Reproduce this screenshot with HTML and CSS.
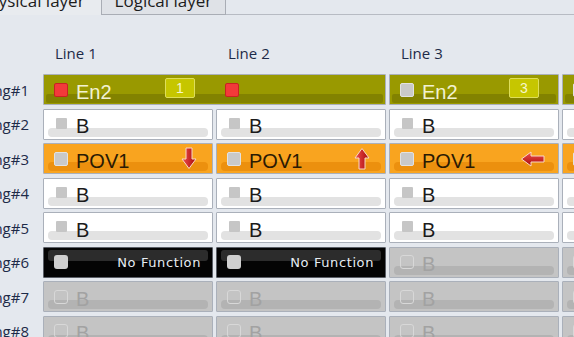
FILE: index.html
```html
<!DOCTYPE html>
<html lang="en">

<head>
    <meta charset="UTF-8">
    <meta name="viewport" content="width=device-width, initial-scale=1.0">
    <title>Physical layer</title>
    <link rel="stylesheet" href="styles.css">
</head>

<body>
    <div class="tabs">
        <div class="tab current">Physical layer</div>
        <div class="tab">Logical layer</div>
        <div class="tab-rest"></div>
    </div>
    <div class="panel">
        <div class="grid">
            <div class="head"></div>
            <div class="head">Line 1</div>
            <div class="head">Line 2</div>
            <div class="head">Line 3</div>
            <div class="head">Line 4</div>

            <!-- row 1 -->
            <div class="label"><span>Setting#1</span></div>
            <div class="cell olive group">
                <div class="slot">
                    <i class="sq red"></i><span class="txt">En2</span><span class="badge">1</span>
                </div>
                <div class="slot">
                    <i class="sq red"></i>
                </div>
            </div>
            <div class="cell olive"><i class="sq"></i><span class="txt">En2</span><span class="badge">3</span></div>
            <div class="cell olive"><i class="sq"></i><span class="txt">En2</span></div>

            <!-- row 2 -->
            <div class="label"><span>Setting#2</span></div>
            <div class="cell white"><i class="sq small"></i><span class="txt">B</span></div>
            <div class="cell white"><i class="sq small"></i><span class="txt">B</span></div>
            <div class="cell white"><i class="sq small"></i><span class="txt">B</span></div>
            <div class="cell white"><i class="sq small"></i><span class="txt">B</span></div>

            <!-- row 3 -->
            <div class="label"><span>Setting#3</span></div>
            <div class="cell orange"><i class="sq"></i><span class="txt">POV1</span>
                <svg class="arrow" width="16" height="23" viewBox="0 0 16 23">
                    <defs>
                        <linearGradient id="gv" x1="0" y1="0" x2="1" y2="0">
                            <stop offset="0" stop-color="#f05050" />
                            <stop offset="1" stop-color="#a80808" />
                        </linearGradient>
                    </defs>
                    <path d="M5 1H11V12H15L8 21.5L1 12H5Z" fill="url(#gv)" stroke="#f6d8c8" stroke-width="1" />
                </svg>
            </div>
            <div class="cell orange"><i class="sq"></i><span class="txt">POV1</span>
                <svg class="arrow" width="16" height="23" viewBox="0 0 16 23">
                    <path d="M5 22H11V11H15L8 1.5L1 11H5Z" fill="url(#gv)" stroke="#f6d8c8" stroke-width="1" />
                </svg>
            </div>
            <div class="cell orange"><i class="sq"></i><span class="txt">POV1</span>
                <svg class="arrow wide" width="25" height="16" viewBox="0 0 25 16">
                    <defs>
                        <linearGradient id="gh" x1="0" y1="0" x2="0" y2="1">
                            <stop offset="0" stop-color="#f05050" />
                            <stop offset="1" stop-color="#a80808" />
                        </linearGradient>
                    </defs>
                    <path d="M24 5V11H11V15L1.5 8L11 1V5Z" fill="url(#gh)" stroke="#f6d8c8" stroke-width="1" />
                </svg>
            </div>
            <div class="cell orange"><i class="sq"></i><span class="txt">POV1</span></div>

            <!-- row 4 -->
            <div class="label"><span>Setting#4</span></div>
            <div class="cell white"><i class="sq small"></i><span class="txt">B</span></div>
            <div class="cell white"><i class="sq small"></i><span class="txt">B</span></div>
            <div class="cell white"><i class="sq small"></i><span class="txt">B</span></div>
            <div class="cell white"><i class="sq small"></i><span class="txt">B</span></div>

            <!-- row 5 -->
            <div class="label"><span>Setting#5</span></div>
            <div class="cell white"><i class="sq small"></i><span class="txt">B</span></div>
            <div class="cell white"><i class="sq small"></i><span class="txt">B</span></div>
            <div class="cell white"><i class="sq small"></i><span class="txt">B</span></div>
            <div class="cell white"><i class="sq small"></i><span class="txt">B</span></div>

            <!-- row 6 -->
            <div class="label"><span>Setting#6</span></div>
            <div class="cell black"><i class="sq"></i><span class="nofn">No Function</span></div>
            <div class="cell black"><i class="sq"></i><span class="nofn">No Function</span></div>
            <div class="cell off"><i class="sq"></i><span class="txt">B</span></div>
            <div class="cell off"><i class="sq"></i><span class="txt">B</span></div>

            <!-- row 7 -->
            <div class="label"><span>Setting#7</span></div>
            <div class="cell off"><i class="sq"></i><span class="txt">B</span></div>
            <div class="cell off"><i class="sq"></i><span class="txt">B</span></div>
            <div class="cell off"><i class="sq"></i><span class="txt">B</span></div>
            <div class="cell off"><i class="sq"></i><span class="txt">B</span></div>

            <!-- row 8 -->
            <div class="label"><span>Setting#8</span></div>
            <div class="cell off"><i class="sq"></i><span class="txt">B</span></div>
            <div class="cell off"><i class="sq"></i><span class="txt">B</span></div>
            <div class="cell off"><i class="sq"></i><span class="txt">B</span></div>
            <div class="cell off"><i class="sq"></i><span class="txt">B</span></div>
        </div>
    </div>
</body>

</html>
```

FILE: styles.css
```css
* {
    margin: 0;
    padding: 0;
    box-sizing: border-box;
}

body {
    width: 574px;
    height: 337px;
    overflow: hidden;
    background-color: #e4e8ee;
    font-family: "Open Sans", "DejaVu Sans", sans-serif;
    color: #1d2a48;
}

.tabs {
    display: flex;
    height: 22px;
    margin-top: -7px;
    margin-left: -35px;
}

.tab {
    font-size: 17px;
    line-height: 16px;
    padding: 0 13px;
    border: 1px solid #a9adb5;
    border-top: none;
    background-color: #dfe2e7;
    color: #1c1c1c;
}

.tab.current {
    background-color: #e8ebef;
    border-bottom: none;
    border-right: none;
    padding: 0 16px 0 12px;
}

.tab-rest {
    flex: 1;
    border-bottom: 1px solid #b7bbc3;
}

.panel {
    padding-top: 20.5px;
}

.grid {
    display: grid;
    grid-template-columns: 40px repeat(4, 170px);
    grid-template-rows: 35px;
    grid-auto-rows: 31px;
    column-gap: 3px;
    row-gap: 3.5px;
    width: 732px;
}

.head {
    padding-left: 12px;
    font-size: 15px;
    line-height: 35px;
    color: #1d2a48;
}

.grid .head:first-child {
    padding: 0;
}

.label {
    display: flex;
    justify-content: flex-end;
    align-items: center;
    padding-right: 11px;
    font-size: 15px;
    white-space: nowrap;
    color: #1d2a48;
}

/* cells */
.cell {
    position: relative;
    display: flex;
    align-items: center;
    padding: 0 0 0 10px;
    border: 1px solid #aab0ba;
    border-radius: 1px;
    font-family: "Liberation Sans", Arial, sans-serif;
}

.cell::after {
    content: "";
    position: absolute;
    left: 4px;
    right: 4px;
    bottom: 2px;
    height: 9px;
    border-radius: 4px;
    background-color: rgba(0, 0, 0, 0.11);
}

.cell > *,
.slot > * {
    position: relative;
    z-index: 1;
}

.group {
    grid-column: span 2;
    padding: 0;
}

.slot {
    display: flex;
    align-items: center;
    width: 169px;
    height: 100%;
    padding-left: 10px;
}

.slot + .slot {
    width: auto;
    flex: 1;
    padding-left: 12px;
}

.txt {
    font-size: 20px;
    line-height: 20px;
    padding-top: 4px;
    margin-left: 8px;
}

.sq {
    display: block;
    flex: none;
    width: 14px;
    height: 14px;
    border: 1px solid #e2e2e2;
    border-radius: 2px;
    background-color: #c9c9c9;
}

.sq.small {
    width: 11px;
    height: 11px;
    margin: -2px 1px 0 2px;
    border: none;
    border-radius: 1px;
    background-color: #c6c6c6;
}

.sq.red {
    background-color: #f23a3a;
    border-color: #c82222;
}

.white {
    background-color: #ffffff;
}

.white::after {
    background-color: #e2e2e2;
}

.white .txt {
    color: #1b1b1b;
}

.olive {
    background-color: #999900;
}

.olive::after {
    left: 2px;
    right: 2px;
    bottom: 1px;
    border-radius: 2px;
    background-color: #828200;
}

.olive .txt {
    color: #f2f2d2;
}

.orange {
    background-color: #f9a41f;
}

.orange::after {
    background-color: #ec900e;
}

.orange .txt {
    color: #2a1a04;
}

.black {
    background-color: #040404;
    border-color: #5a5e66;
}

.black::after {
    top: 2px;
    bottom: auto;
    height: 11px;
    border-radius: 3px;
    background-color: #2c2c2c;
}

.black .sq {
    border: none;
    border-radius: 3px;
    background-color: #cfcfcf;
}

.nofn {
    margin-left: auto;
    padding-right: 11px;
    font-family: "DejaVu Sans", sans-serif;
    font-size: 13px;
    letter-spacing: 0.6px;
    color: #e6ecf2;
}

.off {
    background-color: #c4c4c4;
}

.off::after {
    background-color: #b3b3b3;
}

.off .sq {
    border: 1.5px solid #d8d8d8;
    border-radius: 3px;
    background-color: transparent;
}

.off .txt {
    color: #a2a2a2;
}

.badge {
    margin-left: auto;
    margin-right: 18px;
    margin-top: -3px;
    width: 30px;
    height: 20px;
    border: 1px solid #dede5a;
    border-radius: 2px;
    background-color: #c6c600;
    color: #f6f6cc;
    font-size: 14px;
    line-height: 18px;
    text-align: center;
}

.cell > .badge {
    margin-right: 19px;
}

.arrow {
    display: block;
    margin-left: auto;
    margin-right: 15px;
}

.arrow.wide {
    margin-right: 13px;
}
```
